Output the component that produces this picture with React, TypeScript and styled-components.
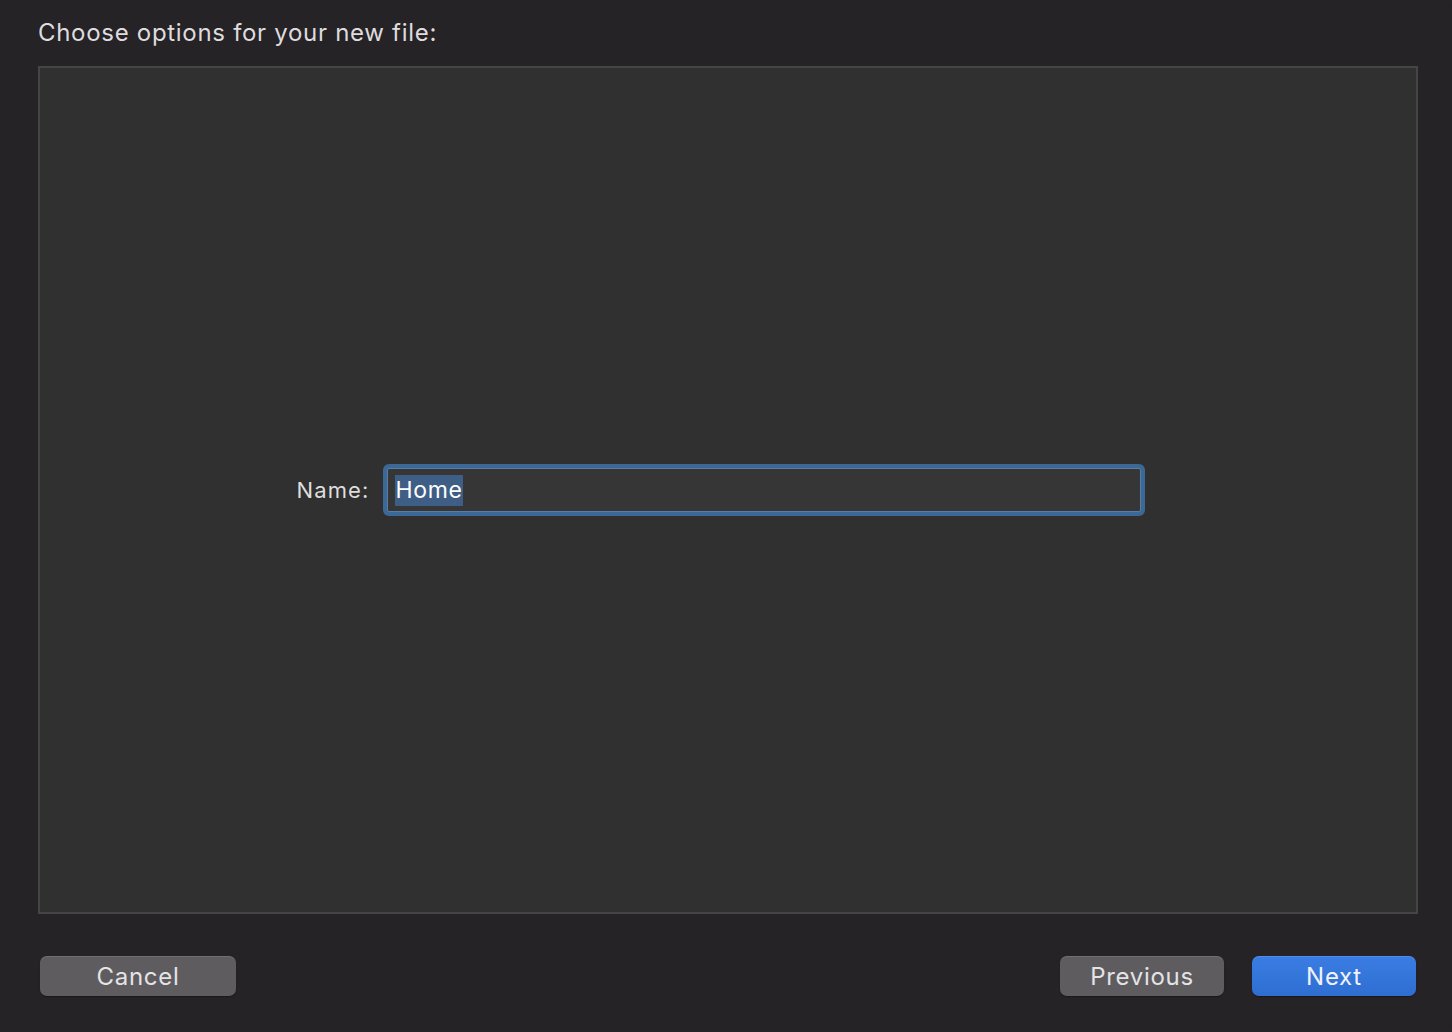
import { createGlobalStyle, styled } from "styled-components";

const GlobalStyle = createGlobalStyle`
  html, body {
    margin: 0;
    padding: 0;
    background: #262326;
  }
  * {
    box-sizing: border-box;
  }
`;

const App = () => {
  return (
    <>
      <GlobalStyle />
      <Window>
        <Title>Choose options for your new file:</Title>
        <OptionsPanel>
          <FormRow>
            <Label>Name:</Label>
            <FieldRing>
              <Field>
                <Selected>Home</Selected>
              </Field>
            </FieldRing>
          </FormRow>
        </OptionsPanel>
        <Footer>
          <Button $width={196}>Cancel</Button>
          <RightButtons>
            <Button $width={164}>Previous</Button>
            <Button $width={164} $primary>
              Next
            </Button>
          </RightButtons>
        </Footer>
      </Window>
    </>
  );
};

export default App;

const Window = styled.div`
  width: 1452px;
  height: 1032px;
  display: flex;
  flex-direction: column;
  padding: 18px 34px 36px 38px;
  background: #262326;
  border-radius: 10px;
  font-family: Inter, "Liberation Sans", sans-serif;
  color: #e3e2e4;
`;

const Title = styled.div`
  height: 48px;
  font-size: 24px;
  line-height: 30px;
  letter-spacing: 0.7px;
  color: #dedcdf;
`;

const OptionsPanel = styled.div`
  flex: 1;
  display: flex;
  align-items: center;
  justify-content: center;
  padding-right: 14px;
  background: #303030;
  border: 2px solid #454545;
`;

const FormRow = styled.div`
  display: flex;
  align-items: center;
  gap: 14px;
`;

const Label = styled.div`
  font-size: 22px;
  letter-spacing: 1.1px;
  color: #dedede;
  text-align: right;
`;

const FieldRing = styled.div`
  width: 762px;
  height: 52px;
  padding: 4px;
  border-radius: 6px;
  background: #3b6897;
`;

const Field = styled.div`
  height: 100%;
  display: flex;
  align-items: center;
  padding-left: 7px;
  background: #363636;
  border: 1px solid #5a7da3;
  border-radius: 2px;
`;

const Selected = styled.span`
  font-size: 23px;
  line-height: 31px;
  letter-spacing: 0.7px;
  color: #ffffff;
  background: #3e5e86;
`;

const Footer = styled.div`
  height: 40px;
  margin-top: 42px;
  padding: 0 2px;
  display: flex;
  justify-content: space-between;
`;

const RightButtons = styled.div`
  display: flex;
  gap: 28px;
`;

const Button = styled.button<{ $width: number; $primary?: boolean }>`
  width: ${(p) => p.$width}px;
  height: 40px;
  border: none;
  border-radius: 7px;
  padding: 0;
  font-family: Inter, "Liberation Sans", sans-serif;
  font-size: 24px;
  letter-spacing: 0.7px;
  color: ${(p) => (p.$primary ? "#eef3fb" : "#e4e3e5")};
  background: ${(p) =>
    p.$primary
      ? "linear-gradient(#3a7de3, #2f6ed1)"
      : "#5e5c5f"};
  box-shadow: 0 1px 1px rgba(0, 0, 0, 0.35), inset 0 1px 0 rgba(255, 255, 255, 0.12);
`;
